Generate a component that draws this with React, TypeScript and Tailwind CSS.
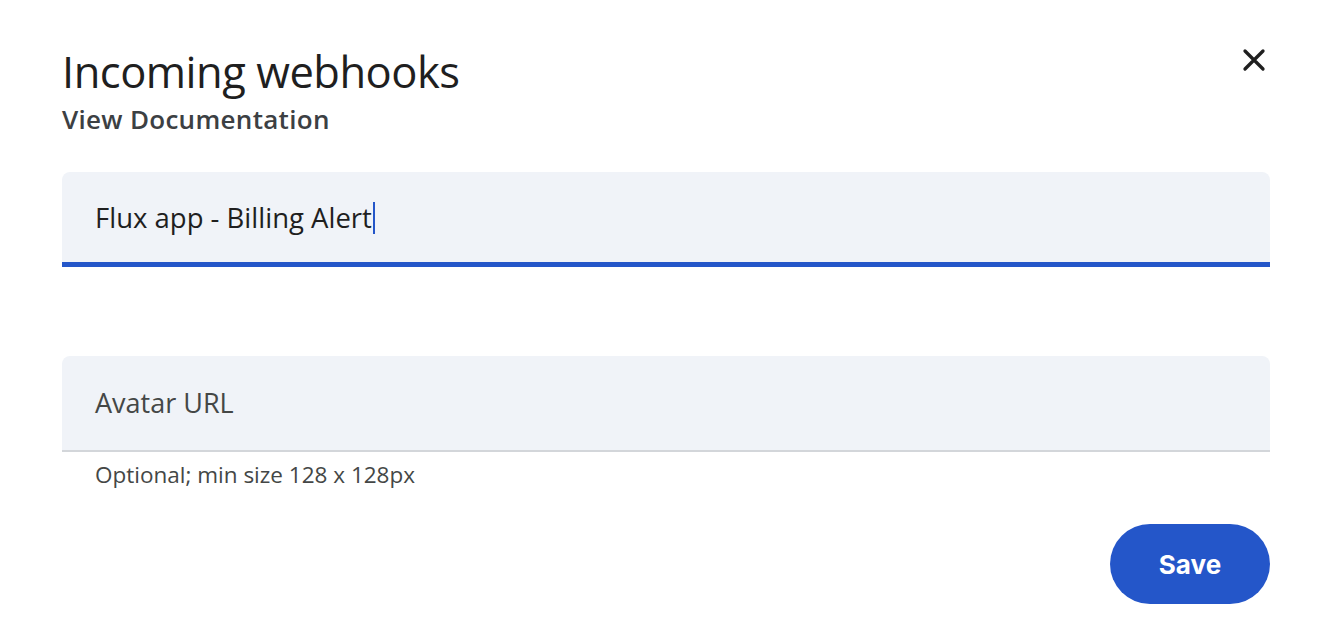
export default function App() {
  return (
    <div className="min-h-screen bg-white pl-[62px] pr-[56px] pt-[44px] font-['Open_Sans',sans-serif]">
      <div className="flex items-start justify-between">
        <div className="flex flex-col">
          <h1 className="h-[56px] text-[43.5px] leading-[56px] font-normal tracking-[-0.5px] text-[#1f1f1f]">
            Incoming webhooks
          </h1>
          <a className="mt-[3px] h-[32px] text-[26px] leading-[32px] font-semibold tracking-[0.3px] text-[#3c4043]">View Documentation</a>
        </div>
        <button type="button" className="mt-[-2px] mr-[-2px] flex h-[36px] w-[36px] items-center justify-center text-[#1f1f1f]">
          <svg viewBox="0 0 24 24" width="36" height="36" fill="none" stroke="currentColor" strokeWidth="2.2" strokeLinecap="round">
            <path d="M6 6l12 12M18 6L6 18" />
          </svg>
        </button>
      </div>

      {/* Name field */}
      <div className="mt-[37px] flex h-[95px] flex-col rounded-t-[8px] bg-[#f0f3f8]">
        <div className="flex flex-1 items-center px-[33px] pt-[2px]">
          <span className="text-[27.5px] leading-[36px] text-[#1f1f1f]">Flux app - Billing Alert</span>
          <span className="ml-[1px] h-[32px] w-[2px] bg-[#2456c9]" />
        </div>
        <div className="h-[5px] bg-[#2456c9]" />
      </div>

      {/* Avatar field */}
      <div className="mt-[89px] flex h-[96px] flex-col rounded-t-[8px] bg-[#f0f3f8]">
        <div className="flex flex-1 items-center px-[33px]">
          <span className="text-[27px] leading-[36px] text-[#444746]">Avatar URL</span>
        </div>
        <div className="h-[2px] bg-[#d3d6da]" />
      </div>
      <p className="mt-[8px] px-[33px] text-[22.5px] leading-[30px] text-[#444746]">Optional; min size 128 x 128px</p>

      <div className="mt-[34px] flex justify-end">
        <button type="button" className="h-[80px] w-[160px] rounded-full bg-[#2456c9] text-[26px] font-bold text-white font-['Inter',sans-serif]">
          Save
        </button>
      </div>
    </div>
  )
}
